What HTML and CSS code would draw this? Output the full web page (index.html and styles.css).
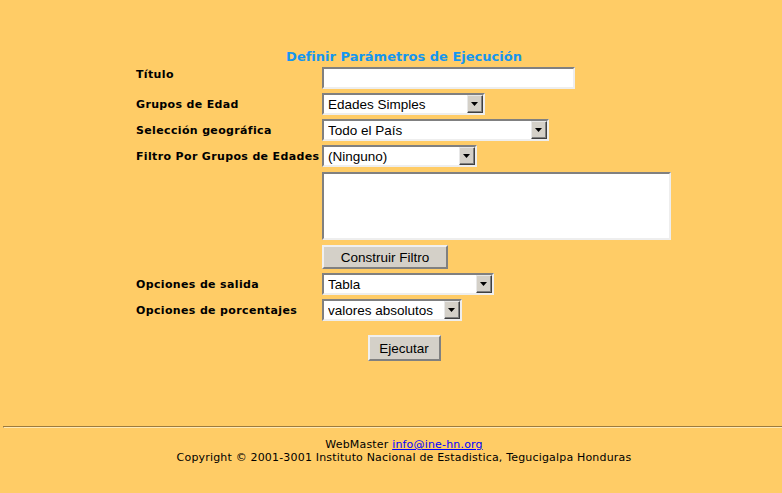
FILE: index.html
```html
<!DOCTYPE html>
<html lang="es">
<head>
  <meta charset="UTF-8">
  <title>Definir Parámetros de Ejecución</title>
  <link rel="stylesheet" href="styles.css">
</head>
<body>

  <div class="page">
    <form class="params">
      <h1 class="heading">Definir Parámetros de Ejecución</h1>

      <div class="grid">
        <label class="lbl lbl-top" for="titulo">Título</label>
        <div><input type="text" id="titulo" class="txt"></div>

        <label class="lbl" for="grupos">Grupos de Edad</label>
        <div>
          <span class="combo w-edad">
            <select id="grupos"><option>Edades Simples</option></select>
            <span class="arrow"><svg width="7" height="4" viewBox="0 0 7 4"><polygon points="0,0 7,0 3.5,4" fill="#000"/></svg></span>
          </span>
        </div>

        <label class="lbl" for="geo">Selección geográfica</label>
        <div>
          <span class="combo w-geo">
            <select id="geo"><option>Todo el País</option></select>
            <span class="arrow"><svg width="7" height="4" viewBox="0 0 7 4"><polygon points="0,0 7,0 3.5,4" fill="#000"/></svg></span>
          </span>
        </div>

        <label class="lbl" for="filtro">Filtro Por Grupos de Edades</label>
        <div>
          <span class="combo w-filtro">
            <select id="filtro"><option>(Ninguno)</option></select>
            <span class="arrow"><svg width="7" height="4" viewBox="0 0 7 4"><polygon points="0,0 7,0 3.5,4" fill="#000"/></svg></span>
          </span>
        </div>

        <div></div>
        <div class="gap1"><textarea class="area"></textarea></div>

        <div></div>
        <div class="gap1"><button type="button" class="btn btn-filtro">Construir Filtro</button></div>

        <label class="lbl" for="salida">Opciones de salida</label>
        <div>
          <span class="combo w-salida">
            <select id="salida"><option>Tabla</option></select>
            <span class="arrow"><svg width="7" height="4" viewBox="0 0 7 4"><polygon points="0,0 7,0 3.5,4" fill="#000"/></svg></span>
          </span>
        </div>

        <label class="lbl" for="pct">Opciones de porcentajes</label>
        <div>
          <span class="combo w-pct">
            <select id="pct"><option>valores absolutos</option></select>
            <span class="arrow"><svg width="7" height="4" viewBox="0 0 7 4"><polygon points="0,0 7,0 3.5,4" fill="#000"/></svg></span>
          </span>
        </div>
      </div>

      <div class="run">
        <button type="submit" class="btn btn-run">Ejecutar</button>
      </div>
    </form>
  </div>

  <hr class="rule">

  <div class="page">
    <footer class="foot">
      <div>WebMaster <a href="mailto:info@ine-hn.org">info@ine-hn.org</a></div>
      <div>Copyright © 2001-3001 Instituto Nacional de Estadistica, Tegucigalpa Honduras</div>
    </footer>
  </div>

</body>
</html>
```

FILE: styles.css
```css
body {
  margin: 0;
  background-color: #ffcc66;
  color: #000;
  font-family: 'DejaVu Sans', Verdana, sans-serif;
}

.page {
  padding-left: 26px;
}

.params {
  width: 540px;
  margin: 0 auto;
  padding-top: 49px;
}

.heading {
  margin: 0 0 2px;
  font-size: 13px;
  line-height: 16px;
  font-weight: bold;
  color: #1496f0;
  text-align: center;
}

.grid {
  display: grid;
  grid-template-columns: 186px 1fr;
  row-gap: 4px;
  align-items: center;
  padding-left: 2px;
}

.lbl {
  font-size: 11px;
  line-height: 13px;
  font-weight: bold;
  letter-spacing: 0.35px;
  white-space: nowrap;
}

.lbl-top {
  align-self: start;
  padding-top: 1px;
}

.gap1 {
  margin-top: 1px;
}

.txt, .area, .combo select {
  box-sizing: border-box;
  border: 2px solid;
  border-color: #808080 #eeeeee #eeeeee #808080;
  background: #fff;
  font-family: 'Liberation Sans', Arial, sans-serif;
  font-size: 13.5px;
  color: #000;
  margin: 0;
  outline: none;
}

.txt {
  display: block;
  width: 253px;
  height: 22px;
  padding: 0 4px;
}

.area {
  display: block;
  width: 349px;
  height: 68px;
  resize: none;
  padding: 2px 4px;
}

.combo {
  position: relative;
  display: block;
  height: 22px;
}

.combo select {
  appearance: none;
  -webkit-appearance: none;
  width: 100%;
  height: 22px;
  padding: 0 20px 0 4px;
  border-radius: 0;
}

.combo .arrow {
  position: absolute;
  top: 2px;
  right: 2px;
  width: 16px;
  height: 18px;
  box-sizing: border-box;
  background: #d4d0c8;
  border: 1px solid;
  border-color: #e8e8e8 #404040 #404040 #e8e8e8;
  box-shadow: inset -1px -1px #808080;
  display: flex;
  align-items: center;
  justify-content: center;
  pointer-events: none;
}

.combo .arrow svg {
  display: block;
  margin: 0 1px 1px 0;
}

.w-edad { width: 163px; }
.w-geo { width: 227px; }
.w-filtro { width: 155px; }
.w-salida { width: 172px; }
.w-pct { width: 140px; }

.btn {
  box-sizing: border-box;
  background-color: #d4d0c8;
  border: 2px solid;
  border-color: #f0f0f0 #808080 #808080 #f0f0f0;
  font-family: 'Liberation Sans', Arial, sans-serif;
  font-size: 13.5px;
  color: #000;
  padding: 0;
  margin: 0;
  cursor: pointer;
}

.btn-filtro {
  display: block;
  width: 126px;
  height: 24px;
}

.run {
  display: flex;
  justify-content: center;
  margin-top: 14px;
}

.btn-run {
  width: 73px;
  height: 26px;
}

.rule {
  margin: 65px 0 0 3px;
  height: 0;
  border: 0;
  border-top: 1px solid #9c7b3e;
  border-left: 1px solid #9c7b3e;
  border-bottom: 1px solid #ffe8b3;
}

.foot {
  padding-top: 10px;
  font-family: 'DejaVu Sans', Verdana, sans-serif;
  font-size: 11px;
  line-height: 13px;
  letter-spacing: 0.18px;
  text-align: center;
}

.foot a {
  color: #0000ff;
}
```
